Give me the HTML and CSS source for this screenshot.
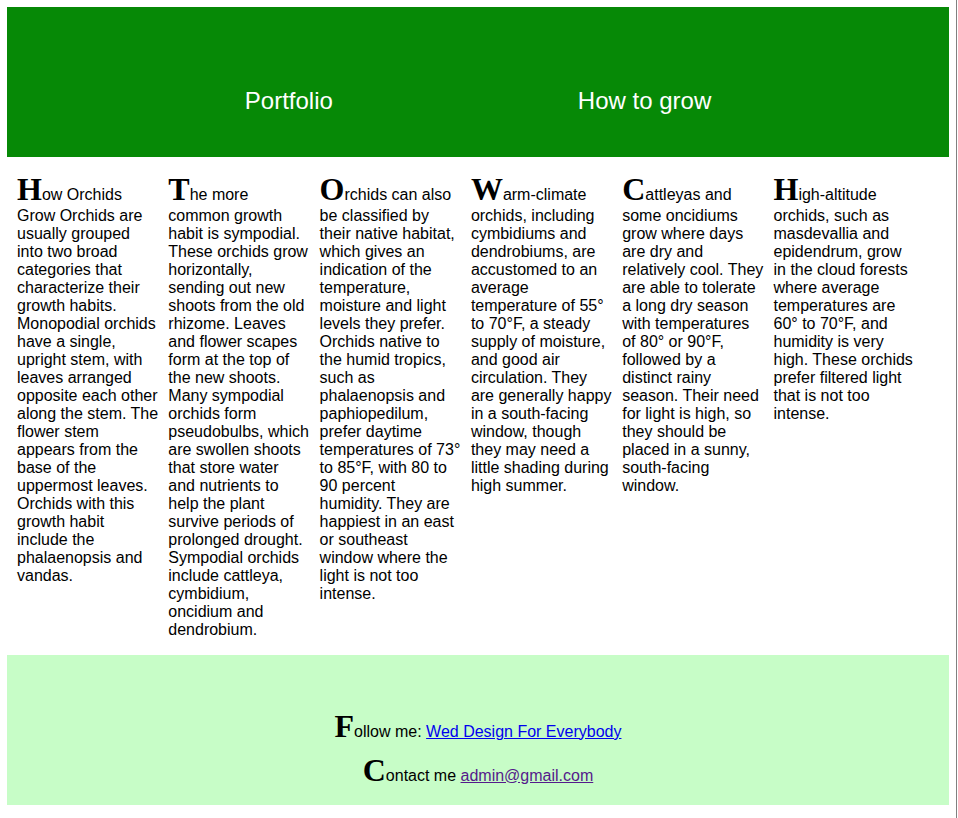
FILE: index.html
```html
<!DOCTYPE html>
<html lang="en">
<head>
<meta charset="utf-8">
<title>Orchids</title>
<link rel="stylesheet" href="styles.css">
</head>
<body>
<header class="site-header">
  <nav class="nav">
    <a class="nav-link" href="#">Portfolio</a>
    <a class="nav-link" href="#">How to grow</a>
  </nav>
</header>
<main class="columns">
  <p class="col">How Orchids Grow Orchids are usually grouped into two broad categories that characterize their growth habits. Monopodial orchids have a single, upright stem, with leaves arranged opposite each other along the stem. The flower stem appears from the base of the uppermost leaves. Orchids with this growth habit include the phalaenopsis and vandas.</p>
  <p class="col">The more common growth habit is sympodial. These orchids grow horizontally, sending out new shoots from the old rhizome. Leaves and flower scapes form at the top of the new shoots. Many sympodial orchids form pseudobulbs, which are swollen shoots that store water and nutrients to help the plant survive periods of prolonged drought. Sympodial orchids include cattleya, cymbidium, oncidium and dendrobium.</p>
  <p class="col">Orchids can also be classified by their native habitat, which gives an indication of the temperature, moisture and light levels they prefer. Orchids native to the humid tropics, such as phalaenopsis and paphiopedilum, prefer daytime temperatures of 73° to 85°F, with 80 to 90 percent humidity. They are happiest in an east or southeast window where the light is not too intense.</p>
  <p class="col">Warm-climate orchids, including cymbidiums and dendrobiums, are accustomed to an average temperature of 55° to 70°F, a steady supply of moisture, and good air circulation. They are generally happy in a south-facing window, though they may need a little shading during high summer.</p>
  <p class="col">Cattleyas and some oncidiums grow where days are dry and relatively cool. They are able to tolerate a long dry season with temperatures of 80° or 90°F, followed by a distinct rainy season. Their need for light is high, so they should be placed in a sunny, south-facing window.</p>
  <p class="col">High-altitude orchids, such as masdevallia and epidendrum, grow in the cloud forests where average temperatures are 60° to 70°F, and humidity is very high. These orchids prefer filtered light that is not too intense.</p>
</main>
<footer class="site-footer">
  <div class="foot-line">Follow me: <a class="link" href="#">Wed Design For Everybody</a></div>
  <div class="foot-line">Contact me <a class="link visited" href="#">admin@gmail.com</a></div>
</footer>
</body>
</html>
```

FILE: styles.css
```css
html {
  margin-right: 1px;
  border-right: 1px solid #808080;
  min-height: 100%;
  box-sizing: border-box;
  background: #fff;
}

body {
  margin: 7px;
  font-family: "Liberation Sans", Arial, sans-serif;
  font-size: 16px;
  line-height: 18px;
  color: #000;
}

.site-header {
  height: 150px;
  box-sizing: border-box;
  background: #068906;
  padding-top: 80px;
}

.nav {
  display: flex;
  justify-content: center;
  gap: 245px;
  font-size: 24px;
  line-height: 28px;
}

.nav-link {
  color: #fff;
  text-decoration: none;
}

.columns {
  display: flex;
  align-items: flex-start;
}

.col {
  flex: 0 0 15%;
  margin: 16px 0 16px 10px;
}

.col::first-letter,
.foot-line::first-letter {
  font-family: "Liberation Serif", "Times New Roman", serif;
  font-weight: bold;
  font-size: 32px;
  line-height: 33.6px;
}

.site-footer {
  height: 150px;
  box-sizing: border-box;
  background: #c7fdc7;
  padding-top: 55px;
  display: flex;
  flex-direction: column;
  align-items: center;
  gap: 10.5px;
}

.link {
  color: #0000ee;
  text-decoration: underline;
}

.link.visited {
  color: #551a8b;
}
```
